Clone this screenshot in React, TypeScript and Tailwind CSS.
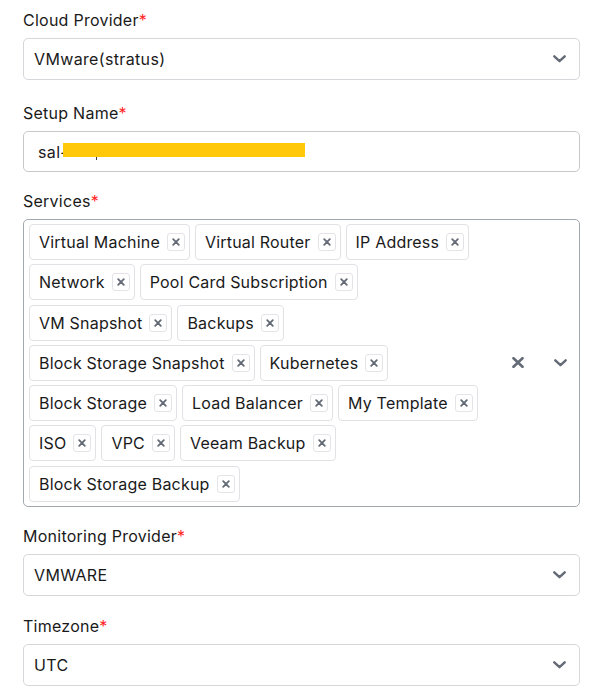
import React from "react";

const Chevron = () => (
  <svg width="13" height="8" viewBox="0 0 13 8" fill="none">
    <path d="M1.3 1.3 L6.5 6.2 L11.7 1.3" stroke="#646b76" strokeWidth="2.4" strokeLinecap="round" strokeLinejoin="round" />
  </svg>
);

const ClearX = () => (
  <svg width="12" height="11" viewBox="0 0 12 11" fill="none">
    <path d="M1.5 1.2 L10.5 9.8 M10.5 1.2 L1.5 9.8" stroke="#646b76" strokeWidth="2.6" strokeLinecap="round" />
  </svg>
);

const SmallX = () => (
  <svg width="8" height="8" viewBox="0 0 8 8" fill="none">
    <path d="M1.2 1.2 L6.8 6.8 M6.8 1.2 L1.2 6.8" stroke="#646b76" strokeWidth="1.8" strokeLinecap="round" />
  </svg>
);

const Label = ({ text, className = "" }: { text: string; className?: string }) => (
  <div className={"text-[16px] leading-[24px] tracking-[0.25px] text-[#1a1a1a] mb-[6px] " + className}>
    {text}
    <span className="text-[#ff1f1f]">*</span>
  </div>
);

const Select = ({ value }: { value: string }) => (
  <div className="h-[42px] border border-[#d6d6db] rounded-[5px] flex items-center pl-[10px] pr-[13px] text-[16px] tracking-[0.35px] text-[#1a1a1a]">
    <span className="flex-1">{value}</span>
    <Chevron />
  </div>
);

const services = [
  "Virtual Machine",
  "Virtual Router",
  "IP Address",
  "Network",
  "Pool Card Subscription",
  "VM Snapshot",
  "Backups",
  "Block Storage Snapshot",
  "Kubernetes",
  "Block Storage",
  "Load Balancer",
  "My Template",
  "ISO",
  "VPC",
  "Veeam Backup",
  "Block Storage Backup",
];

export default function App() {
  return (
    <div
      className="w-[613px] h-[695px] bg-white pl-[23px] pr-[33px] pt-[8px] overflow-hidden"
      style={{ fontFamily: "Inter, 'Noto Sans', sans-serif" }}
    >
      <Label text="Cloud Provider" />
      <Select value="VMware(stratus)" />

      <Label text="Setup Name" className="mt-[21px]" />
      <div className="relative h-[41px] border border-[#c9c9cc] rounded-[5px] flex items-center pl-[14px] text-[16px] tracking-[0.35px] text-[#1a1a1a]">
        <span>sal-</span>
        <div className="absolute left-[39px] top-[11px] w-[242px] h-[14px] bg-[#ffc90a]" />
        <div className="absolute left-[72px] top-[25px] w-[1px] h-[3px] bg-[#3a3a3a]" />
      </div>

      <Label text="Services" className="mt-[17px]" />
      <div className="border border-[#a3a7ae] rounded-[5px] flex items-stretch">
        <div className="flex-1 flex flex-wrap content-start gap-x-[5px] gap-y-[4.3px] pl-[5px] pt-[4px] pb-[4px]">
          {services.map((s) => (
            <div
              key={s}
              className="h-[36px] flex items-center border border-[#e2e2e6] rounded-[4px] pl-[9px] pr-[4px] text-[16px] tracking-[0.2px] text-[#1a1a1a]"
            >
              <span>{s}</span>
              <span className="ml-[7px] w-[18px] h-[18px] border border-[#e4e4e8] rounded-[3px] flex items-center justify-center">
                <SmallX />
              </span>
            </div>
          ))}
        </div>
        <div className="flex items-center gap-[22px] pl-[8px] pr-[9px]">
          <span className="w-[20px] flex justify-center"><ClearX /></span>
          <span className="w-[20px] flex justify-center"><Chevron /></span>
        </div>
      </div>

      <Label text="Monitoring Provider" className="mt-[17px]" />
      <Select value="VMWARE" />

      <Label text="Timezone" className="mt-[18px]" />
      <Select value="UTC" />
    </div>
  );
}
